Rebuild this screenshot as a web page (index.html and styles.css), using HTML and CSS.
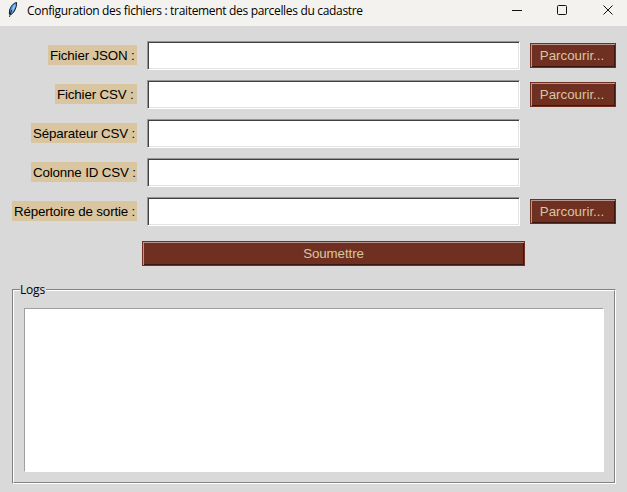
FILE: index.html
```html
<!DOCTYPE html>
<html lang="fr">
<head>
<meta charset="utf-8">
<title>Configuration des fichiers : traitement des parcelles du cadastre</title>
<link rel="stylesheet" href="styles.css">
</head>
<body>
<header class="titlebar">
  <svg class="feather" width="12" height="18" viewBox="0 0 12 18">
    <path d="M9.500 1.500C6.500 2 3.500 5.500 2.700 9L2.300 13L4 13.500C7.500 11.500 9.800 6 9.500 1.500Z" fill="#4e96df" stroke="#10151c" stroke-width="1"/>
    <path d="M8 4L5 10" stroke="#8fc2f2" stroke-width="1.800"/>
    <path d="M5 8.500C3.800 11 3 13.500 2.500 16" fill="none" stroke="#15191f" stroke-width="0.900"/>
  </svg>
  <span class="title">Configuration des fichiers : traitement des parcelles du cadastre</span>
  <svg class="controls" width="104" height="12" viewBox="0 0 104 12" fill="none" stroke="#111">
    <path d="M0 6.500H10"/>
    <rect x="45.500" y="1.500" width="9" height="9" rx="1"/>
    <path d="M91.500 1.500L100.500 10.500M100.500 1.500L91.500 10.500"/>
  </svg>
</header>
<main>
  <form class="form">
    <label class="label" for="json"><span class="w-json">Fichier JSON :</span></label><input class="entry" id="json"><button type="button" class="button">Parcourir...</button>
    <label class="label" for="csv"><span class="w-csv">Fichier CSV :</span></label><input class="entry" id="csv"><button type="button" class="button">Parcourir...</button>
    <label class="label" for="sep"><span class="w-sep">Séparateur CSV :</span></label><input class="entry" id="sep"><i></i>
    <label class="label" for="col"><span class="w-col">Colonne ID CSV :</span></label><input class="entry" id="col"><i></i>
    <label class="label" for="out"><span class="w-out">Répertoire de sortie :</span></label><input class="entry" id="out"><button type="button" class="button">Parcourir...</button>
  </form>
  <button type="button" class="button submit">Soumettre</button>
  <section class="logs">
    <div class="logs-inner">
      <span class="legend">Logs</span>
      <div class="log-text"></div>
    </div>
  </section>
</main>
</body>
</html>
```
FILE: styles.css
```css
* { box-sizing: border-box; }
body {
  margin: 0;
  height: 492px;
  overflow: hidden;
  background: #d9d9d9;
  font: 13.33px/20px "Liberation Sans", Arial, sans-serif;
  color: #000;
}
.titlebar {
  display: flex;
  height: 26px;
  padding: 0 13px 0 7px;
  background: #f3f2ee;
}
.feather { margin-top: 1px; }
.title {
  margin-left: 8px;
  font: 12px/22px "Open Sans", "Noto Sans", sans-serif;
  letter-spacing: -0.325px;
  white-space: nowrap;
}
.controls { margin: 4px -2px 0 auto; }
main { padding: 15px 11px 0 12px; }
.form {
  display: grid;
  grid-template-columns: 125px 373px 86px;
  grid-auto-rows: 29px;
  gap: 10px;
  align-items: center;
}
.label {
  display: flex;
  justify-content: flex-end;
  margin-top: -1px;
  letter-spacing: -0.15px;
}
.label span {
  height: 20px;
  padding-left: 2px;
  line-height: 22px;
  background: #d9c5a0;
  white-space: nowrap;
}
.w-json { width: 89px; }
.w-csv { width: 82px; }
.w-sep, .w-col { width: 106px; }
.w-out { width: 125px; }
.entry {
  width: 373px;
  height: 29px;
  padding: 2px 4px;
  border: 1px solid;
  border-color: #969696 #fff #fff #969696;
  border-radius: 0;
  background: #fff;
  box-shadow: inset 1px 1px #404040, inset -1px -1px #e3e3e3;
  font: inherit;
  outline: none;
}
.button {
  height: 25px;
  padding: 0 2px 0 0;
  border: 1px solid #6f3022;
  background: #6f3022;
  box-shadow: inset 1px 1px #b7978f, inset -1px -1px #3b1710;
  color: #d9c5a0;
  font: inherit;
  line-height: 22px;
}
.submit {
  display: block;
  width: 383px;
  margin: 15px 0 0 130px;
  padding: 0;
  letter-spacing: -0.1px;
}
.logs {
  height: 195px;
  margin-top: 23px;
  border: 1px solid;
  border-color: #828282 #fff #fff #828282;
}
.logs-inner {
  height: 193px;
  padding: 0 10px;
  border: 1px solid;
  border-color: #fff #828282 #828282 #fff;
}
.legend {
  display: block;
  width: 26px;
  height: 16px;
  margin: -9px 0 10px -4px;
  background: #d9d9d9;
  font: 12px/16px "Open Sans", "Noto Sans", sans-serif;
  letter-spacing: -0.2px;
}
.log-text {
  height: 164px;
  border: 1px solid;
  border-color: #a0a0a0 #fff #fff #a0a0a0;
  background: #fff;
}
```
